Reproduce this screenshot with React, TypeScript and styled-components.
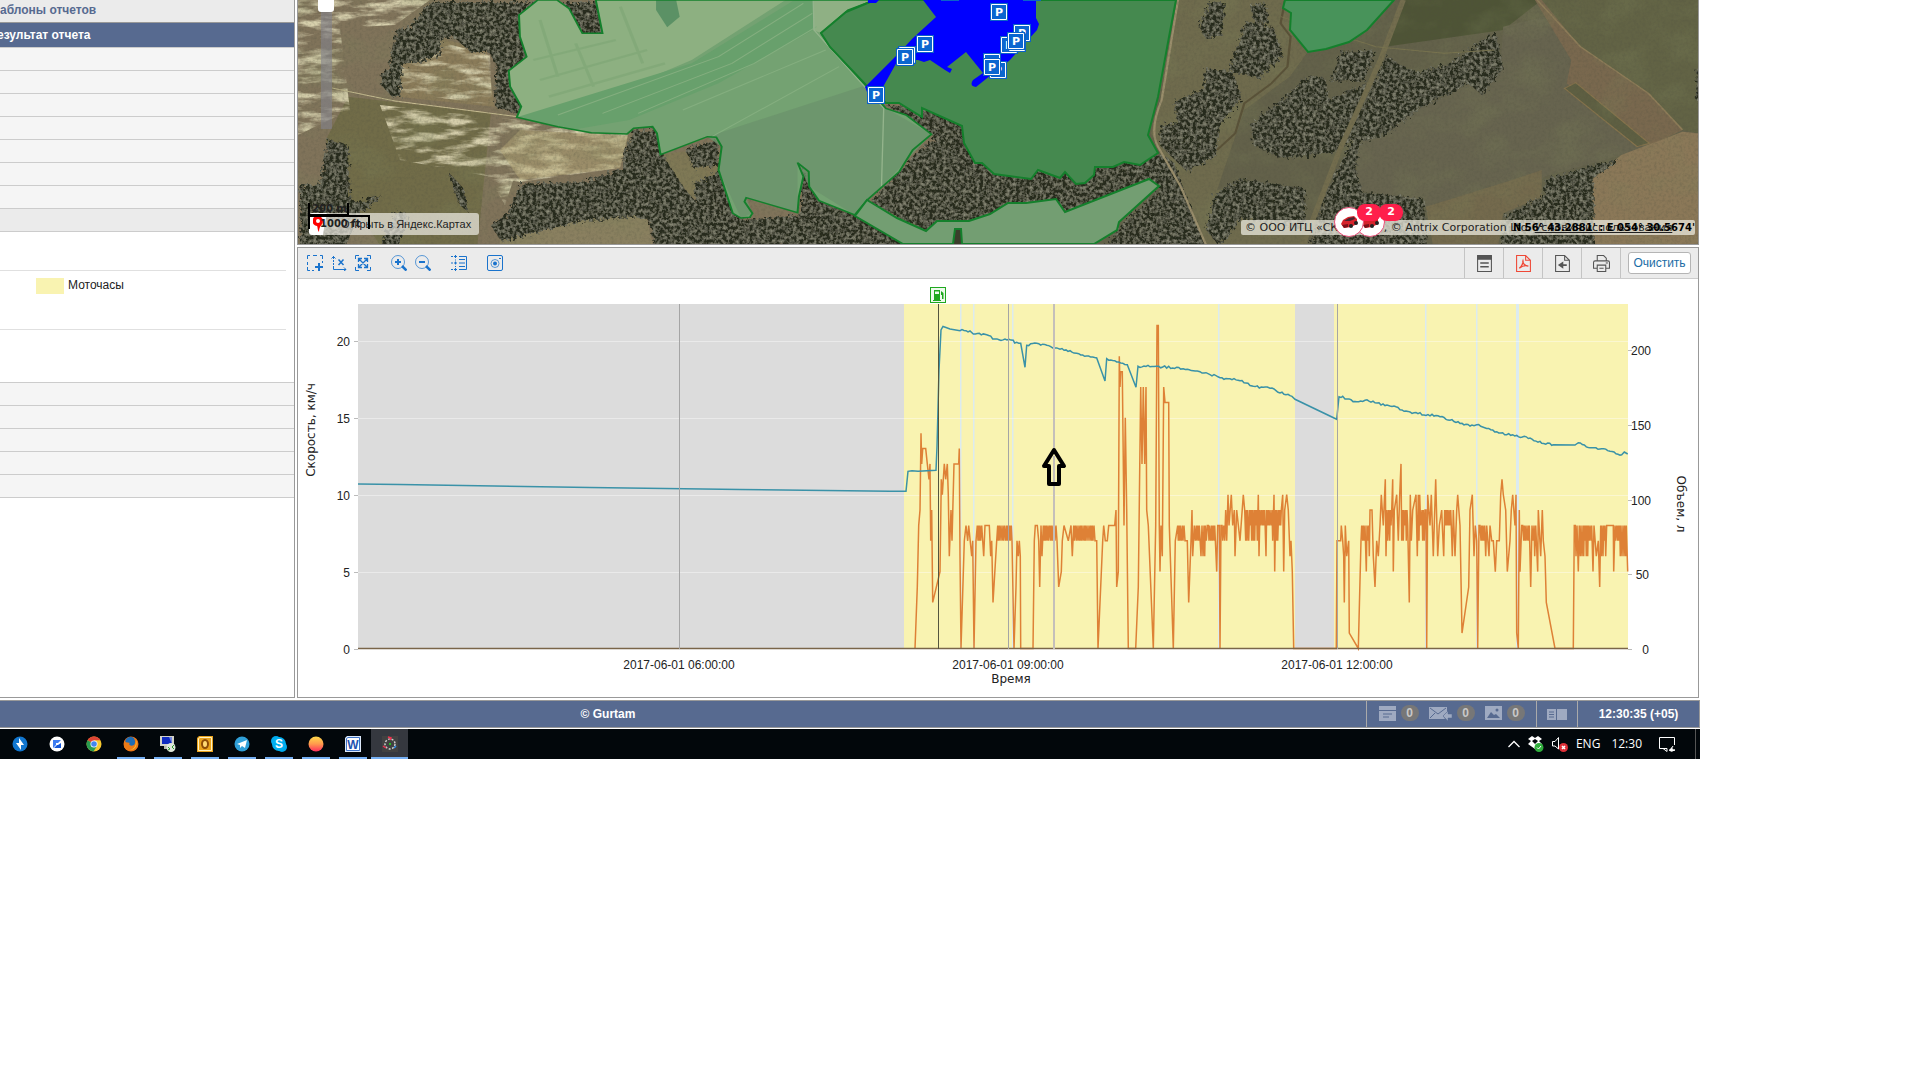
import React from "react";
import styled, { createGlobalStyle, css } from "styled-components";

const GlobalStyle = createGlobalStyle`
  *, *::before, *::after { box-sizing: border-box; }
  html, body { margin: 0; background: #fff; }
  body { font-family: "Liberation Sans", Arial, sans-serif; font-size: 12px; color: #222; }
  button { font: inherit; padding: 0; border: 0; background: none; color: inherit; }
  svg { display: block; }
`;

/* ---------- shell ---------- */

const Shell = styled.div`
  width: 100%;
  max-width: 1700px;
  overflow: hidden;
`;

const Workspace = styled.div`
  display: flex;
  padding-right: 1px;
  margin-bottom: 2px;
`;

/* ---------- sidebar ---------- */

const Sidebar = styled.aside`
  flex: none;
  width: 295px;
  border-right: 1px solid #999;
  border-bottom: 1px solid #999;
  overflow: hidden;
`;

const SectionTitle = styled.h2<{ $active?: boolean }>`
  margin: 0;
  height: ${(p) => (p.$active ? 25 : 23)}px;
  line-height: ${(p) => (p.$active ? 24 : 20)}px;
  border-bottom: 1px solid ${(p) => (p.$active ? "#ccc" : "#999")};
  background: ${(p) => (p.$active ? "#576a90" : "#ebebeb")};
  color: ${(p) => (p.$active ? "#fff" : "#576a90")};
  font-size: 12px;
  font-weight: bold;
  text-indent: ${(p) => (p.$active ? -3 : 0)}px;
  white-space: nowrap;
`;

const ResultRow = styled.div<{ $open?: boolean }>`
  height: 23px;
  border-bottom: 1px solid #ccc;
  background: ${(p) => (p.$open ? "#ebebeb" : "#f5f5f5")};
`;

const Legend = styled.div`
  height: 151px;
  border-bottom: 1px solid #ccc;
  padding: 38px 8px 0 0;
`;

const LegendGroup = styled.div`
  height: 60px;
  border-top: 1px solid #e0e0e0;
  border-bottom: 1px solid #e0e0e0;
  padding: 7px 0 0 36px;
`;

const LegendItem = styled.div`
  display: flex;
  align-items: flex-start;
  gap: 4px;
  height: 16px;
`;

const Swatch = styled.span`
  width: 28px;
  height: 16px;
  background: #f9f3b1;
`;

/* ---------- main column ---------- */

const Main = styled.main`
  flex: 1;
  min-width: 0;
  margin-left: 2px;
  display: flex;
  flex-direction: column;
  gap: 2px;
`;

const MapPanel = styled.section`
  position: relative;
  border: 1px solid #999;
  border-top: 0;
  overflow: hidden;
  svg.canvas { width: 100%; height: auto; }
`;

const ZoomSlider = styled.input`
  position: absolute;
  left: 20px;
  top: 0;
  width: 16px;
  height: 129px;
  margin: 0;
  appearance: none;
  writing-mode: vertical-lr;
  background: linear-gradient(rgba(130, 130, 140, 0.6), rgba(130, 130, 140, 0.6)) center / 11px 100% no-repeat;
  border-radius: 4px;
  &::-webkit-slider-thumb {
    appearance: none;
    width: 16px;
    height: 12px;
    border-radius: 0 0 3px 3px;
    background: #fff;
  }
`;

const YandexLink = styled.a`
  position: absolute;
  left: 11px;
  bottom: 9px;
  height: 22px;
  width: 170px;
  line-height: 22px;
  padding-left: 32px;
  border-radius: 3px;
  background: linear-gradient(100deg, #fff 17px, rgba(240, 238, 230, 0.7) 18px);
  color: #222;
  font-size: 11px;
  text-decoration: none;
  white-space: nowrap;
  svg { position: absolute; left: 4px; top: 3px; }
`;

const ScaleMeters = styled.div`
  position: absolute;
  left: 10px;
  bottom: 28px;
  width: 41px;
  height: 13px;
  border: 2px solid #000;
  border-top: 0;
  padding-left: 2px;
  font: bold 10px/12px "DejaVu Sans", sans-serif;
  white-space: nowrap;
`;

const ScaleFeet = styled.div`
  position: absolute;
  left: 10px;
  bottom: 15px;
  width: 62px;
  height: 14px;
  border: 2px solid #000;
  border-bottom: 0;
  padding-left: 10px;
  font: bold 10px/14px "DejaVu Sans", sans-serif;
  white-space: nowrap;
`;

const Copyright = styled.div`
  position: absolute;
  right: 3px;
  bottom: 9px;
  width: 454px;
  height: 15px;
  padding: 0 4px;
  border-radius: 2px;
  background: rgba(235, 233, 222, 0.75);
  font: 11px/15px "DejaVu Sans", sans-serif;
  color: #222;
  white-space: nowrap;
  overflow: hidden;
  a { color: inherit; }
`;

const Position = styled.div`
  position: absolute;
  right: 3px;
  bottom: 9px;
  font: bold 10px/15px "DejaVu Sans", sans-serif;
  color: #000;
  white-space: nowrap;
`;

const UnitMarker = styled.div<{ $x: number }>`
  position: absolute;
  right: ${(p) => p.$x}px;
  bottom: 7px;
  width: 30px;
  height: 30px;
  border-radius: 50%;
  border: 1px solid #e8517a;
  background: #fff;
  display: grid;
  place-items: center;
`;

const UnitCount = styled.span<{ $x: number }>`
  position: absolute;
  right: ${(p) => p.$x}px;
  bottom: 23px;
  width: 24px;
  height: 17px;
  border-radius: 8px;
  background: #ff1f4b;
  color: #fff;
  font: bold 11px/16px "DejaVu Sans", sans-serif;
  text-align: center;
`;

/* ---------- chart panel ---------- */

const ChartPanel = styled.section`
  border: 1px solid #999;
  svg.canvas { width: 100%; height: auto; }
`;

const Toolbar = styled.div`
  display: flex;
  height: 31px;
  background: #ebebeb;
  border-bottom: 1px solid #ccc;
  padding: 0 7px 0 5px;
`;

const ToolButton = styled.button<{ $gap?: boolean }>`
  width: 24px;
  display: grid;
  place-items: center;
  color: #1a73cc;
  margin-left: ${(p) => (p.$gap ? 12 : 0)}px;
`;

const Spacer = styled.div`
  flex: 1;
`;

const ExportButton = styled.button`
  && { border-left: 1px solid #c4c4c4; color: #555; }
  width: 39px;
  display: grid;
  place-items: center;
`;

const ClearSlot = styled.div`
  border-left: 1px solid #c4c4c4;
  padding: 4px 0 0 7px;
`;

const ClearButton = styled.button`
  && { border: 1px solid #b5b5b5; background: #fff; color: #1a6ca5; }
  width: 63px;
  height: 22px;
  border-radius: 3px;
  font-size: 12px;
`;

/* ---------- footer ---------- */

const Footer = styled.footer`
  display: flex;
  height: 28px;
  margin-bottom: 1px;
  border: 1px solid #999;
  border-left: 0;
  background: #576a90;
  color: #fff;
  font-weight: bold;
  line-height: 27px;
`;

const Vendor = styled.div`
  flex: 1;
  text-align: center;
  padding-right: 150px;
`;

const FooterCell = styled.div<{ $width: number; $gap?: number }>`
  width: ${(p) => p.$width}px;
  border-left: 1px solid #aaa;
  display: flex;
  align-items: center;
  justify-content: center;
  gap: ${(p) => p.$gap ?? 0}px;
`;

const Notice = styled.div`
  display: flex;
  align-items: center;
  gap: 5px;
  padding-bottom: 2px;
`;

const Badge = styled.span`
  width: 18px;
  height: 16px;
  border-radius: 8px;
  background: #777;
  color: #c8c8c8;
  font-size: 12px;
  line-height: 16px;
  text-align: center;
`;

/* ---------- taskbar ---------- */

const Taskbar = styled.nav`
  display: flex;
  height: 30px;
  background: #02070b;
  padding: 0 4px 0 1px;
  color: #fff;
  font: 12px/30px "Open Sans", "Noto Sans", sans-serif;
`;

const TaskButton = styled.button<{ $running?: boolean; $active?: boolean }>`
  width: 37px;
  display: grid;
  place-items: center;
  ${(p) =>
    p.$running &&
    css`
      background: linear-gradient(#76b0f4, #76b0f4) bottom / 28px 2px no-repeat;
    `}
  ${(p) =>
    p.$active &&
    css`
      background: linear-gradient(#76b0f4, #76b0f4) bottom / 100% 2px no-repeat #35383f;
    `}
`;

const Tray = styled.div`
  display: flex;
  align-items: center;
  margin-left: auto;
  padding-right: 19px;
  border-right: 1px solid #555;
  svg { margin-right: 8px; }
  svg:last-child { margin-right: 0; }
`;

const TrayText = styled.span`
  margin-right: 11px;
  &:last-of-type { margin-right: 17px; }
`;

/* ---------- map drawing ---------- */

const leftForest = [
  "310,0 700,0 700,105 540,330 505,335 455,315 458,190 440,150 400,150 362,105 335,115 332,160 290,178 246,190 243,285 225,285 200,250 202,210 218,200 222,150 235,80 262,75",
  "80,412 125,430 130,590 150,600 200,580 150,640 120,733 18,733 18,550 62,548",
  "235,625 262,640 240,733 200,733 210,680",
  "350,510 385,560 395,630 375,610",
  "765,385 822,385 835,470 880,560 905,600 900,545 960,505 1010,654 1140,640 1140,488 1190,602 1265,645 1390,733 812,733 800,655 770,643 640,660 470,718 445,670 480,640 515,545 650,540 740,502 745,450",
  "1330,308 1440,322 1510,378 1568,480 1568,650 1425,690 1295,600 1400,450 1440,405",
  "880,440 950,415 960,490 900,500",
];

const rightForest = [
  "0,515 370,455 400,480 470,733 250,733 290,660 372,560 350,537 170,637 145,600 0,635",
  "480,0 515,0 505,100 470,110 455,70",
  "570,10 600,0 610,60 580,70",
  "560,60 620,75 640,160 590,230 520,205",
  "470,200 530,210 550,290 505,360 492,460 430,510 370,430 372,370 410,360 400,300 465,260",
  "700,220 735,230 742,290 840,240 800,400 765,450 640,470 575,430 570,370 640,290",
  "770,150 845,145 820,235 745,240",
  "870,160 900,190 935,210 1000,190 1110,90 1125,200 1080,280 1050,245 940,320 865,400 810,420 800,500 815,570 950,590 960,733 700,733 735,570 800,400 850,210",
  "545,530 690,560 690,680 550,650 500,733 470,680 490,580",
  "1220,530 1380,470 1325,530 1325,733 1120,733 1130,640 1215,580",
  "1552,200 1562,200 1562,330 1550,290",
];

const fieldLight =
  "M555 0L513 45 515 110 530 170 490 212 493 260 518 320 508 352 600 380 675 398 755 402 770 385 812 380 822 400 830 464 935 410 955 412 967 440 960 510 992 640 1010 654 1030 652 1036 640 1018 605 1022 593 1060 608 1137 638 1140 590 1150 530 1137 488 1162 515 1163 560 1185 602 1265 645 1293 600 1365 515 1395 450 1437 403 1380 345 1335 325 1290 256 1210 140 1190 100 1250 30 1300 5V0H685L700 100H655L625 25 598 0Z";

const parkings: [number, number][] = [
  [950, -8], [1032, -8], [999, 12], [925, 44], [907, 55], [905, 57], [876, 95],
  [1022, 33], [1009, 45], [1017, 43], [1016, 41], [992, 62], [998, 70], [992, 67],
];

const Aerial = () => (
  <svg className="canvas" viewBox="298 0 1400 244" role="img" aria-label="Спутниковая карта">
    <defs>
      <filter id="grain" x="0" y="0" width="100%" height="100%">
        <feTurbulence type="fractalNoise" baseFrequency="0.35" numOctaves="3" seed="4" />
        <feColorMatrix values="0 0 0 0 0.08  0 0 0 0 0.08  0 0 0 0 0.05  1.8 0 0 0 -0.75" />
      </filter>
      <filter id="clouds" x="0" y="0" width="100%" height="100%">
        <feTurbulence type="fractalNoise" baseFrequency="0.02 0.03" numOctaves="4" seed="9" />
        <feColorMatrix values="0 0 0 0 0.2  0 0 0 0 0.22  0 0 0 0 0.1  2.4 0 0 0 -1.1" />
      </filter>
      <filter id="straw" x="0" y="0" width="100%" height="100%">
        <feTurbulence type="fractalNoise" baseFrequency="0.03 0.12" numOctaves="4" seed="21" result="n" />
        <feColorMatrix in="n" values="0 0 0 0 0.68  0 0 0 0 0.63  0 0 0 0 0.42  3.6 0 0 0 -1.55" />
        <feComposite in2="SourceGraphic" operator="in" />
      </filter>
      <filter id="wood" x="-5%" y="-5%" width="110%" height="110%">
        <feTurbulence type="fractalNoise" baseFrequency="0.3" numOctaves="3" seed="3" result="n" />
        <feDisplacementMap in="SourceGraphic" in2="n" scale="9" result="shape" />
        <feColorMatrix in="n" values="0 0 0 0 0.3  0 0 0 0 0.3  0 0 0 0 0.22  1.8 0 0 0 -0.7" result="light" />
        <feComposite in="light" in2="shape" operator="in" result="tex" />
        <feMerge><feMergeNode in="shape" /><feMergeNode in="tex" /></feMerge>
      </filter>
    </defs>
    <rect x="298" width="700" height="244" fill="#80735a" />
    <rect x="990" width="708" height="244" fill="#63614a" />
    <g transform="translate(290 0) scale(.4464 .3333)">
      <path d="M130 290L450 340 420 733H200L130 590 80 420Z" fill="#716c48" />
      <path d="M246 190L335 115 440 150 458 320 240 290Z" fill="#8a7b59" />
      <path d="M830 464L960 440V560L900 600Z" fill="#807755" />
      <path d="M470 718L640 660 770 643 800 655 812 733H470Z" fill="#8a8060" />
      <path d="M1185 602L1265 645 1390 733H1290L1190 670Z" fill="#6b5f49" />
    </g>
    <g filter="url(#straw)">
      <path d="M298 0H430L395 25 340 28 350 110 298 135ZM380 105L520 120 628 134 620 168 520 182 400 160ZM400 65L440 42 490 55 492 105 400 92Z" />
      <path d="M490 180L515 175 505 205Z" />
    </g>
    <path d="M520 130L628 136 620 168 520 180 500 150Z" fill="#b5a877" opacity=".5" />
    <path d="M332 88Q370 96 395 101L520 117" fill="none" stroke="#c9bf93" strokeWidth="1" />
    <g transform="translate(990 0) scale(.4541 .3333)">
      <path d="M412 0H650L700 155 660 230 560 330 500 570 560 560 690 600 700 733H475L420 560 355 400 375 300Z" fill="#6f6b4d" />
      <path d="M910 0H1215L1130 90 870 140Z" fill="#4e5436" />
      <path d="M805 420L1060 250 1125 180 1130 80 1220 50 1450 440 1380 470 1220 530 1150 640 960 620 810 570Z" fill="#67644f" />
      <path d="M1205 0H1560V400L1525 390 1450 280 1300 140Z" fill="#626345" />
      <path d="M1200 0H1215L1300 140 1450 280 1525 390 1450 440 1270 250 1280 180Z" fill="#79684e" />
      <path d="M1390 465L1525 395 1562 400V733H1330L1325 540Z" fill="#8b7858" />
      <path d="M1265 265L1290 248 1452 430 1425 440Z" fill="#5e5f42" stroke="#86734c" strokeWidth="3" />
      <path d="M960 620L1150 540 1215 510V590L1130 640 1120 733H975Z" fill="#746a4d" />
    </g>
    <rect x="298" width="1400" height="244" filter="url(#clouds)" opacity=".35" />
    <g filter="url(#wood)" fill="#26291d">
      <g transform="translate(292 2) scale(.4464 .3333)">{leftForest.map((p) => <polygon key={p} points={p} />)}</g>
      <g transform="translate(992 2) scale(.4541 .3333)">{rightForest.map((p) => <polygon key={p} points={p} />)}</g>
    </g>
    <g transform="translate(990 0) scale(.4541 .3333)" fill="none">
      <path d="M650 0L640 70 662 110 655 200 620 250 560 310 540 400 500 450" stroke="#5a5238" strokeWidth="5" />
      <path d="M910 0L860 180 770 450 690 733" stroke="#736d4e" strokeWidth="12" />
      <path d="M414 0L378 300Q350 390 370 440L420 560 475 733" stroke="#9a8e6c" strokeWidth="5" />
      <path d="M1205 0L1300 140 1450 280 1525 390" stroke="#8d7c58" strokeWidth="4" />
      <path d="M640 50L850 140 1000 160 1110 150" stroke="#78734f" strokeWidth="3" />
    </g>
    <rect x="298" width="1400" height="244" filter="url(#grain)" opacity=".3" />

    <g transform="translate(290 0) scale(.4464 .3333)">
      <path d={fieldLight} fill="#74a272" />
      <path d="M555 0L513 45 515 110 530 170 490 212 493 260 518 320 508 352 600 350 900 180 1110 0H685L700 100H655L625 25 598 0Z" fill="#8db081" />
      <path d="M508 352L900 190 1130 0H1172V90L960 250 760 360 640 388Z" fill="#68a06c" />
      <path d="M1172 0H1300L1190 100 1172 90Z" fill="#8fb084" />
      <path d="M1290 256L1335 325 1437 403 1265 645 1163 560 1137 488 1137 638 1022 593 1036 640 1010 654 960 510 967 440 935 410Z" fill="#6b936b" opacity=".8" />
      <path d="M600 345L960 170 1150 10M700 340L990 190 1170 40M780 340L1040 190 1180 80M880 330L1200 150M945 410L1230 200" stroke="#84ae7f" strokeWidth="3" fill="none" />
      <path d="M1172 0L1174 90 1330 325 1325 560" stroke="#94b48c" strokeWidth="3" fill="none" />
      <path d="M545 180L730 120M560 240L800 150M580 290L840 190M560 60L600 230M740 20L790 190M640 130L680 260" stroke="#7fa676" strokeWidth="7" fill="none" opacity=".7" />
      <path d="M820 0L865 0 873 50 845 82 820 30Z" fill="#5b9165" />
      <path d={fieldLight} fill="none" stroke="#14802c" strokeWidth="4.5" />
    </g>
    <path d="M870 2L846 12 821 33 830 47 866 85 886 103 899 103 922 117V108L962 126 964 143 975 163H982L994 174 1031 179 1038 170 1060 178 1065 172 1076 184 1085 183 1094 175 1095 167H1113L1124 162 1140 165 1158 153 1148 135 1158 97 1169 37 1176 0H870Z" fill="#45894f" stroke="#14802c" strokeWidth="2" />
    <path d="M855 216L867 200 897 218 926 231 937 221H969L990 214 1008 203H1026L1056 199 1065 212 1149 179 1159 186 1119 222 1117 230 1094 244H903Z" fill="#739e72" stroke="#14802c" strokeWidth="2" />
    <path d="M953 244L955 229H961L962 244" fill="#3b3d2b" stroke="#14802c" strokeWidth="2" />
    <path d="M1285 0L1283 8 1291 13 1290 30 1308 52 1326 49 1349 42 1367 30 1394 0Z" fill="#48935a" stroke="#14802c" strokeWidth="2" />
    <path d="M923 0L936 17 913 38 897 55 865 87 867 92 883 87 898 60H918L924 62 930 60 945 70 950 73 952 69 947 67 966 52 983 73 973 80Q969 86 976 87L986 79 1010 60 1037 30 1039 24 1036 18V0ZM868 0H879L876 3H868Z" fill="#00f" />
    {parkings.map(([x, y], i) => (
      <g key={i} transform={`translate(${x} ${y})`}>
        <path d="M-9-9H9V9H-9Z" fill="#0b62c8" />
        <path d="M-7.500-7.500H7.500V7.500H-7.500Z" fill="#0b66d0" stroke="#fff" />
        {y > 0 && <text textAnchor="middle" y="4" fill="#fff" fontFamily="DejaVu Sans, sans-serif" fontWeight="bold" fontSize="11">P</text>}
      </g>
    ))}
  </svg>
);

const Car = () => (
  <svg width="20" height="14" viewBox="0 0 20 14">
    <path d="M2 9L4 5 9 2 15 1 18 4V9L12 12 5 13Z" fill="#d6232b" />
    <path d="M5 6L10 3 15 2 16 4 11 6Z" fill="#4a2430" />
    <path d="M3 10L9 9V12L5 13Z" fill="#7d1018" />
    <circle cx="12" cy="11" r="2" fill="#222" />
    <circle cx="17" cy="8" r="2" fill="#222" />
  </svg>
);

/* ---------- chart data ---------- */

/* Time runs in thirds of a pixel from x = 890; a four-number entry [from, to, low, high] is a dense oscillation. */
type Sample = [number, number] | [number, number, number, number];

const speed: Sample[] = [
  [75, 0], [82, 4], [86, 8], [90, 9], [93, 14], [95, 12], [98, 13], [107, 13], [112, 12], [117, 11], [120, 12], [122, 7], [125, 9], [128, 3], [150, 5], [154, 11], [157, 10], [160, 11], [163, 12], [167, 11], [172, 12], [175, 10], [178, 6], [183, 9], [186, 7], [192, 12], [206, 12], [208, 13], [210, 6], [213, 0],
  [223, 7], [228, 8], [233, 7], [236, 8], [245, 6], [248, 7], [252, 0], [258, 7], [262, 279, 7, 8], [281, 6], [285, 8], [298, 8], [302, 6], [305, 7], [309, 3], [320, 7], [323, 367, 7, 8], [372, 0], [378, 4], [381, 7], [385, 6], [388, 7], [391, 6], [392, 0], [429, 0], [433, 7], [436, 8], [442, 8], [446, 7], [449, 4], [453, 8], [456, 6], [460, 502, 7, 8], [506, 4], [514, 5], [517, 7], [522, 8], [535, 7], [543, 8], [547, 6], [551, 616, 7, 8],
  [620, 7], [624, 0], [638, 7], [641, 8], [646, 7], [652, 7], [656, 8], [674, 8], [678, 9], [680, 4], [685, 5], [688, 19], [690, 17], [692, 18], [697, 18], [702, 8], [706, 15], [710, 9], [715, 0], [737, 0], [745, 4], [752, 17], [756, 12], [760, 17], [764, 12], [768, 17], [770, 9], [775, 8], [790, 0], [797, 8], [801, 21], [805, 21], [808, 8], [810, 5], [813, 8], [817, 6], [821, 17], [825, 16], [836, 16], [838, 8], [850, 0], [856, 7], [863, 885, 7, 8],
  [892, 7], [896, 3], [903, 7], [906, 9], [908, 6], [913, 930, 7, 8], [933, 6], [936, 952, 6, 8], [955, 975, 7, 8], [980, 5], [983, 8], [988, 8], [990, 0], [993, 8], [996, 1005, 7, 8], [1007, 9], [1010, 7], [1014, 10], [1017, 8], [1024, 10], [1028, 8], [1033, 9], [1035, 6], [1040, 9], [1050, 7], [1060, 10], [1064, 1102, 7, 9], [1105, 10], [1107, 6], [1110, 1126, 8, 9], [1128, 6], [1130, 1149, 7, 9], [1152, 10], [1154, 5], [1157, 1175, 7, 9], [1178, 10], [1181, 5], [1184, 9], [1190, 10], [1195, 9], [1200, 6], [1203, 7], [1207, 5], [1211, 0],
  [1339, 0], [1341, 7], [1352, 7], [1354, 8], [1358, 7], [1361, 6], [1363, 3], [1366, 8], [1370, 6], [1376, 7], [1378, 1], [1405, 0], [1413, 7], [1415, 1426, 7, 8], [1429, 5], [1431, 1438, 6, 8], [1440, 9], [1446, 9], [1450, 6], [1455, 4], [1460, 7], [1465, 6], [1470, 8], [1474, 10], [1480, 8], [1486, 11], [1488, 6], [1491, 1505, 7, 9], [1508, 11], [1510, 5], [1513, 9], [1520, 10], [1525, 7], [1529, 10], [1533, 12], [1535, 7], [1538, 1554, 7, 9], [1558, 3], [1561, 10], [1564, 7], [1568, 9], [1578, 10], [1582, 6], [1585, 1593, 7, 10], [1596, 1605, 7, 9], [1608, 9], [1610, 0], [1613, 10], [1620, 8], [1624, 10], [1630, 6], [1637, 11], [1643, 6], [1648, 8], [1655, 1658, 8, 9], [1661, 6], [1664, 1684, 8, 9], [1687, 6], [1690, 9], [1695, 6], [1700, 9], [1703, 10], [1710, 8], [1716, 1], [1736, 4], [1740, 9], [1747, 10], [1752, 6], [1756, 8], [1760, 7], [1763, 0], [1767, 8],
  [1770, 1784, 7, 8], [1787, 6], [1790, 8], [1797, 6], [1800, 8], [1805, 7], [1810, 7], [1816, 5], [1820, 7], [1828, 7], [1832, 10], [1836, 11], [1840, 10], [1847, 9], [1852, 5], [1860, 7], [1864, 9], [1868, 10], [1875, 8], [1878, 10], [1880, 1], [1885, 0], [1888, 9], [1890, 5], [1895, 8], [1898, 1918, 7, 8], [1922, 4], [1926, 1938, 6, 8], [1943, 5], [1945, 9], [1952, 6], [1957, 9], [1960, 7], [1965, 6], [1969, 3], [1995, 0], [2050, 0], [2053, 8], [2056, 2062, 6, 8], [2065, 5], [2068, 2106, 6, 8], [2109, 5], [2112, 8], [2119, 6], [2125, 7], [2129, 4], [2132, 2150, 6, 8], [2153, 8], [2170, 8], [2171, 5], [2175, 2210, 6, 8], [2213, 5],
];

/* Fuel level, same time unit, height in thirds of a pixel below y = 280. */
const fuel: [number, number][] = [
  [210, 152], [240, 153], [250, 162], [290, 164], [315, 177], [370, 181], [374, 189], [392, 190], [405, 262], [410, 196], [440, 190], [470, 196], [510, 208], [540, 212], [560, 220], [620, 234], [645, 303], [650, 236], [680, 246], [712, 254], [738, 322], [744, 259], [800, 259], [880, 266], [930, 275], [990, 293], [1050, 302], [1090, 319], [1140, 325], [1200, 347], [1215, 358], [1340, 418], [1347, 350], [1358, 349], [1365, 357], [1400, 365], [1425, 361], [1500, 378], [1560, 396], [1650, 410], [1740, 438], [1760, 434], [1820, 455], [1885, 470], [1920, 474], [1955, 490], [1990, 494], [2055, 495], [2065, 488], [2100, 503], [2135, 506], [2160, 514], [2195, 524], [2203, 516], [2213, 522],
];

const random = (seed: number) => () => {
  seed = (seed * 16807) % 2147483647;
  return seed / 2147483647;
};

const speedPath = (() => {
  const next = random(77);
  const out: string[] = [];
  const put = (t: number, v: number) => out.push(`${(890 + t / 3).toFixed(1)} ${(648.5 - v * 15.38).toFixed(1)}`);
  for (const s of speed) {
    if (s.length === 2) put(s[0], s[1]);
    else {
      const [from, to, low, high] = s;
      let up = true;
      for (let t = from; t <= to; t += 2 + Math.floor(next() * 1.7)) {
        const slack = high - low > 1 && next() > 0.65 ? 1 : 0;
        put(t, up ? high : low + slack);
        up = !up;
      }
    }
  }
  return "M" + out.join("L");
})();

const fuelPath = (() => {
  const next = random(1234);
  const out = ["358 484L400 484.500L590 487.500L740 489.500L890 491.300L906 491.300L908 471.300L912 470.700L918 471.300L936 470.300L937 447L939 370L941 330L943 326.500L946 327.500L950 329"];
  fuel.forEach(([t, y], i) => {
    out.push(`${(890 + t / 3).toFixed(1)} ${(280 + y / 3).toFixed(1)}`);
    const after = fuel[i + 1];
    if (!after || Math.abs(after[1] - y) > 35 || t === 1990) return;
    for (let u = t + 6; u < after[0] - 4; u += 6) {
      const level = y + ((after[1] - y) * (u - t)) / (after[0] - t) + (next() - 0.5) * 7;
      out.push(`${(890 + u / 3).toFixed(1)} ${(280 + level / 3).toFixed(1)}`);
    }
  });
  return "M" + out.join("L");
})();

const ChartDrawing = () => (
  <svg className="canvas" viewBox="298 279 1400 418" role="img" aria-label="Скорость и объем топлива">
    <rect x="358" y="304" width="1270" height="345" fill="#dcdcdc" />
    <rect x="904" y="304" width="391" height="345" fill="#f9f3b1" />
    <rect x="1334" y="304" width="294" height="345" fill="#f9f3b1" />
    <g fill="#dcebf0">
      {[960, 973, 1012, 1218, 1425, 1476].map((x) => <rect key={x} x={x} y="304" width="1.500" height="345" />)}
      <rect x="1516" y="304" width="3" height="345" />
    </g>
    {[20, 15, 10, 5, 0].map((v) => {
      const y = Math.round(649 - v * 15.38) + 0.5;
      return (
        <g key={v}>
          {v > 0 && <path d={`M358 ${y}H1628`} stroke="#fff" opacity=".4" />}
          <path d={`M354 ${y}H358`} stroke="#bbb" />
          <text x="350" y={y + 4} textAnchor="end">{v}</text>
        </g>
      );
    })}
    {[200, 150, 100, 50, 0].map((v) => {
      const y = Math.round(649 - v * 1.494) + 0.5;
      return (
        <g key={v}>
          <path d={`M1628 ${y}H1632`} stroke="#bbb" />
          <text x={v < 100 ? 1649 : 1651} y={y + 4} textAnchor="end">{v}</text>
        </g>
      );
    })}
    <path d={speedPath} fill="none" stroke="#de8136" strokeWidth="1.500" />
    <path d="M358 648.500H1628" stroke="#7a6549" strokeWidth="1.500" />
    <path d={fuelPath} fill="none" stroke="#3a92a8" strokeWidth="1.500" />
    <path d="M679.500 304V649M1008.500 304V649M1337.500 304V649" stroke="#a5a5a5" />
    <path d="M1054 304V649" stroke="#c4bfba" strokeWidth="2" />
    <path d="M938.500 304V649" stroke="#55553f" />
    <path d="M1054 450L1064 466H1059V484H1049V466H1044Z" fill="#f9f3b1" stroke="#000" strokeWidth="4" strokeLinejoin="round" />
    <path d="M1054 456V482" stroke="#c4bfba" strokeWidth="2" />
    <rect x="930.500" y="287.500" width="15" height="15" fill="#eefaee" stroke="#1fa81f" />
    <path d="M934 290H940V300H941V301H933V300H934ZM941 291L943.500 293V299H942V295H941Z" fill="#1fa81f" />
    <path d="M935 291.500H939V294H935Z" fill="#eefaee" />
    {["06", "09", "12"].map((h, i) => (
      <text key={h} x={679 + i * 329} y="669" textAnchor="middle">{`2017-06-01 ${h}:00:00`}</text>
    ))}
    <g fontFamily="DejaVu Sans, sans-serif">
      <text x="1011" y="683" textAnchor="middle">Время</text>
      <text transform="translate(315 430) rotate(-90)" textAnchor="middle">Скорость, км/ч</text>
      <text transform="translate(1677 504) rotate(90)" textAnchor="middle">Объем, л</text>
    </g>
  </svg>
);

const ChartFrame = styled.div`
  font-size: 12px;
  svg { fill: #222; }
`;

/* ---------- small icons ---------- */

const Line = ({ children, size = 16 }: { children: React.ReactNode; size?: number }) => (
  <svg width={size} height={size} viewBox="0 0 16 16" fill="none" stroke="currentColor">{children}</svg>
);

const tools = [
  { label: "Выделить область", icon: <Line><path d="M.5 4V.5H3M6 .5H10M13 .5H15.500V4M.5 7V10M.5 12V15.500H3M5 15.500H7M15.500 6V8" /><path d="M12 8V16M8 12H16" strokeWidth="2" /></Line> },
  { label: "Масштаб по оси X", icon: <Line><path d="M2.500 1V4M2.500 5V7M2.500 8V10M2.500 11V14.500H15M.5 3.500L2.500 1.500 4.500 3.500M13 12.500L15 14.500 13 16" /><path d="M7.500 4.500L12.500 10M12.500 4.500L7.500 10" strokeWidth="1.500" /></Line> },
  { label: "Показать всё", icon: <Line><path d="M.5 4V.5H4M12 .5H15.500V4M.5 12V15.500H4M12 15.500H15.500V12" /><path d="M3.500 3.500L12.500 12.500M12.500 3.500L3.500 12.500M3.500 7V3.500H7M9 3.500H12.500V7M3.500 9V12.500H7M9 12.500H12.500V9" strokeWidth="1.300" /></Line> },
  { label: "Приблизить", gap: true, icon: <Line><circle cx="7" cy="7" r="6.500" opacity=".7" /><path d="M7 4V10M4 7H10" strokeWidth="2" /><path d="M11 11L15.500 15.500" strokeWidth="2.500" /></Line> },
  { label: "Отдалить", icon: <Line><circle cx="7" cy="7" r="6.500" opacity=".7" /><path d="M4 7H10" strokeWidth="2" /><path d="M11 11L15.500 15.500" strokeWidth="2.500" /></Line> },
  { label: "Легенда", gap: true, icon: <Line><path d="M0 1.500H2M3 1.500H6M8 1.500H15.500V14.500H8M0 8H2M3 8H6M0 14.500H2M3 14.500H6M4.500 0V3M4.500 4.500V5.500M4.500 6.500V9.500M4.500 11V12M4.500 13V16M8 4.500H14M8 8H14M8 11.500H14" /></Line> },
  { label: "Следить", gap: true, icon: <Line><rect x=".5" y=".5" width="15" height="15" rx="1.500" /><circle cx="8" cy="8.500" r="4" opacity=".7" /><circle cx="8" cy="8.500" r="2" fill="currentColor" stroke="none" /><path d="M12 3.500H14" /></Line> },
];

const exportsList = [
  { label: "Отчет", icon: <Line size={17}><path d="M1.500 .5H14.500V15.500H1.500Z" /><path d="M1 2.500H15" strokeWidth="4" /><path d="M4 7.500H12M4 11H12" strokeWidth="1.300" /></Line> },
  { label: "PDF", icon: <Line size={17}><g stroke="#ef4836"><path d="M1.500 .5H10L14.500 5V15.500H1.500ZM10 .5V5H14.500" /><path d="M4 12.500C6 11 8 7.500 7.500 5.500C7 7 9 10.500 12.500 10.500C10 9.500 6 11 4 12.500Z" strokeWidth="1.300" /></g></Line> },
  { label: "Экспорт", icon: <Line size={17}><path d="M1.500 .5H10L14.500 5V15.500H1.500ZM10 .5V5H14.500" /><path d="M12 9.500H5M8 7.500L5 9.500 8 11.500Z" fill="currentColor" strokeWidth="1.500" /></Line> },
  { label: "Печать", icon: <Line size={17}><path d="M4 5V.5H10L12.500 3V5M3.500 12.500H.5V7Q.5 5.500 2 5.500H14Q15.500 5.500 15.500 7V12.500H12.500M4 9.500H12V15.500H4ZM6 12.500H10" /><path d="M12 7.500H14" /></Line> },
];

const Disc = ({ fill, children }: { fill: string; children?: React.ReactNode }) => (
  <svg width="16" height="16" viewBox="0 0 16 16"><circle cx="8" cy="8" r="7.500" fill={fill} />{children}</svg>
);

const tasks = [
  { label: "Навигатор", icon: <Disc fill="#1176cf"><path d="M7 2L12 9H9L9 14 4 7H7Z" fill="#fff" /></Disc> },
  { label: "Облако", icon: <Disc fill="#fff"><path d="M4 4H12L9 7H7V9L4 12Z" fill="#3d7df2" /><path d="M12 7V12H5L8 9H9Z" fill="#1557d8" /></Disc> },
  { label: "Chrome", icon: <Disc fill="#f7c92f"><path d="M8 8L1.500 4.300A7.500 7.500 0 0 1 14.500 4.300H8Z" fill="#df4435" /><path d="M8 8L1.500 4.300A7.500 7.500 0 0 0 7.500 15.500L11 10Z" fill="#289b50" /><circle cx="8" cy="8" r="3.500" fill="#fff" /><circle cx="8" cy="8" r="2.800" fill="#4386ee" /></Disc> },
  { label: "Firefox", running: true, icon: <Disc fill="#e46b16"><circle cx="7.500" cy="6" r="5.200" fill="#1f6db5" /><path d="M1 4C2 7 4 6 7 7C5 8 7 11 11 9C13 7 12 3 10 1C15 3 16 8 14 12C11 16 4 16 1 11Z" fill="#ec7b18" /><path d="M13 4C15 9 12 14 7 14C13 12 13 8 13 4Z" fill="#fbc52e" /></Disc> },
  { label: "Удаленный рабочий стол", running: true, icon: <svg width="16" height="16" viewBox="0 0 16 16"><path d="M0 0H14V10H0Z" fill="#d3d2c7" /><path d="M2 1H12V8H2Z" fill="#102bc0" /><path d="M4 10H10L12 13H4Z" fill="#b6b6ab" /><path d="M9 1H12V8Z" fill="#7186e0" /><circle cx="11" cy="11.500" r="4.500" fill="#e0e7db" /><path d="M8 11L10 13 8 14M14 9L12 11 14 13" stroke="#2d992d" fill="none" /></svg> },
  { label: "Outlook", running: true, icon: <svg width="16" height="16" viewBox="0 0 16 16"><path d="M0 2L2 0H16V16H0Z" fill="#e9a21c" /><path d="M1.500 2.500L3 1.500H14.500V14.500H1.500Z" fill="none" stroke="#fff3c4" /><ellipse cx="8" cy="8" rx="3" ry="4" fill="#ffd873" stroke="#8c4a06" strokeWidth="2" /></svg> },
  { label: "Telegram", running: true, icon: <Disc fill="#2f9fd8"><path d="M3 8L13 4 11 12 8 10 6 12V9Z" fill="#fff" /></Disc> },
  { label: "Skype", running: true, icon: <svg width="16" height="16" viewBox="0 0 16 16"><circle cx="5" cy="5" r="5" fill="#00a9ec" /><circle cx="11" cy="11" r="5" fill="#00a9ec" /><circle cx="8" cy="8" r="7" fill="#00aff0" /><text x="8" y="12" textAnchor="middle" fill="#fff" fontFamily="Liberation Sans, sans-serif" fontSize="12" fontWeight="bold">S</text></svg> },
  { label: "Закат", running: true, icon: <Disc fill="url(#sunset)"><defs><linearGradient id="sunset" x2="0" y2="1"><stop stopColor="#ffd94a" /><stop offset=".5" stopColor="#ff9a4d" /><stop offset="1" stopColor="#ff2d5e" /></linearGradient></defs></Disc> },
  { label: "Word", running: true, icon: <svg width="16" height="16" viewBox="0 0 16 16"><path d="M0 2L2 0H16V16H0Z" fill="#dce9fa" /><path d="M1.500 2.500L3 1.500H14.500V14.500H1.500Z" fill="#fff" stroke="#3f74c8" /><text x="8" y="12.500" textAnchor="middle" fill="#1d54b0" fontFamily="Liberation Sans, sans-serif" fontSize="12" fontWeight="bold">W</text></svg> },
  { label: "Снимок экрана", active: true, icon: <svg width="16" height="16" viewBox="0 0 16 16"><path d="M0 0H16V16H0Z" fill="#414141" /><circle cx="8" cy="8" r="5" fill="none" stroke="#ccc" strokeDasharray="2 1.500" strokeWidth="1.500" /><path d="M6 1L9 2 8 4M1 10L4 12" stroke="#f03050" strokeWidth="1.500" fill="none" /><path d="M12 12L14 10" stroke="#2f8ef0" strokeWidth="1.500" /><path d="M7 7H9V9H7Z" fill="#24c024" /></svg> },
];

const App = () => (
  <>
    <GlobalStyle />
    <Shell>
      <Workspace>
        <Sidebar>
          <SectionTitle>аблоны отчетов</SectionTitle>
          <SectionTitle $active>езультат отчета</SectionTitle>
          {[0, 1, 2, 3, 4, 5, 6, 7].map((n) => <ResultRow key={n} $open={n === 7} />)}
          <Legend>
            <LegendGroup>
              <LegendItem><Swatch />Моточасы</LegendItem>
            </LegendGroup>
          </Legend>
          {[0, 1, 2, 3, 4].map((n) => <ResultRow key={n} />)}
        </Sidebar>

        <Main>
          <MapPanel>
            <Aerial />
            <ZoomSlider type="range" min={0} max={18} defaultValue={0} aria-label="Масштаб карты" />
            <YandexLink href="#yandex">
              <svg width="11" height="16" viewBox="0 0 11 16"><path d="M5 0A5 5 0 0 1 10 5C10 9 6 9 6 16C4 13 5 11 4 10A5 5 0 0 1 5 0Z" fill="#f00" /><circle cx="5" cy="5" r="2" fill="#fff" /></svg>
              Открыть в Яндекс.Картах
            </YandexLink>
            <ScaleMeters>200 m</ScaleMeters>
            <ScaleFeet>1000 ft</ScaleFeet>
            <Copyright>© ООО ИТЦ «СКАНЭКС», © Antrix Corporation Ltd. <a href="#terms">Условия использования</a></Copyright>
            <Position>N 56° 43.2881' : E 054° 30.5674'</Position>
            <UnitMarker $x={313}><Car /></UnitMarker>
            <UnitMarker $x={334}><Car /></UnitMarker>
            <UnitCount $x={317}>2</UnitCount>
            <UnitCount $x={295}>2</UnitCount>
          </MapPanel>

          <ChartPanel>
            <Toolbar>
              {tools.map((t) => <ToolButton key={t.label} $gap={t.gap} aria-label={t.label}>{t.icon}</ToolButton>)}
              <Spacer />
              {exportsList.map((t) => <ExportButton key={t.label} aria-label={t.label}>{t.icon}</ExportButton>)}
              <ClearSlot><ClearButton>Очистить</ClearButton></ClearSlot>
            </Toolbar>
            <ChartFrame><ChartDrawing /></ChartFrame>
          </ChartPanel>
        </Main>
      </Workspace>

      <Footer>
        <Vendor>© Gurtam</Vendor>
        <FooterCell $width={170} $gap={10}>
          <Notice>
            <svg width="17" height="15" viewBox="0 0 17 15" fill="#9faac1"><path d="M0 0H17V4H0ZM0 5H17V15H0Z" /><path d="M4 8H13M4 11H10" stroke="#576a90" /></svg>
            <Badge>0</Badge>
          </Notice>
          <Notice>
            <svg width="23" height="15" viewBox="0 0 23 15" fill="#9faac1"><path d="M0 1H18V6L14 10 16 13H0Z" /><path d="M1 2L9 8 17 2M1 12L6 7" stroke="#576a90" fill="none" /><path d="M14 10L19 5V8H23V12H19V15Z" stroke="#576a90" strokeWidth=".5" /></svg>
            <Badge>0</Badge>
          </Notice>
          <Notice>
            <svg width="17" height="14" viewBox="0 0 17 14" fill="#9faac1"><path d="M0 0H17V14H0Z" /><path d="M2 12L6 6 9 9 11 8 15 12Z" fill="#576a90" /><circle cx="12" cy="4" r="1.500" fill="#576a90" /></svg>
            <Badge>0</Badge>
          </Notice>
        </FooterCell>
        <FooterCell $width={41}>
          <svg width="20" height="11" viewBox="0 0 20 11" fill="#9faac1"><path d="M0 0H9V11H0ZM10 0H20V11H10Z" /><path d="M2 3H7M2 5.500H7M2 8H7" stroke="#576a90" /></svg>
        </FooterCell>
        <FooterCell $width={122}>12:30:35 (+05)</FooterCell>
      </Footer>

      <Taskbar>
        {tasks.map((t) => <TaskButton key={t.label} $running={t.running} $active={t.active} aria-label={t.label}>{t.icon}</TaskButton>)}
        <Tray>
          <svg width="12" height="8" viewBox="0 0 12 8" fill="none" stroke="#fff"><path d="M.5 7L6 1.500 11.500 7" strokeWidth="1.300" /></svg>
          <svg width="16" height="16" viewBox="0 0 16 16"><path d="M0 3L4 0 7 2 10 0 14 3 11 5 14 8 7 13 0 8 3 5Z" fill="#fff" /><path d="M7 3L10 5 7 8 4 5Z" fill="#02070b" /><circle cx="11" cy="11.500" r="4.500" fill="#2fae3c" /><path d="M9 11.500L10.500 13 13 10" stroke="#fff" fill="none" /></svg>
          <svg width="16" height="16" viewBox="0 0 16 16"><path d="M.5 5.500H3L6.500 1.500V13L3 10H.5Z" fill="none" stroke="#fff" /><circle cx="11.500" cy="11.500" r="4.500" fill="#de3038" /><path d="M10 10L13 13M13 10L10 13" stroke="#fff" strokeWidth="1.500" /></svg>
          <TrayText>ENG</TrayText>
          <TrayText>12:30</TrayText>
          <svg width="17" height="16" viewBox="0 0 17 16" fill="none" stroke="#fff"><path d="M8 12.500H5L.5 12.500V1.500H15.500V9M4 12.500L8 15.500V12.500" /><path d="M14 10Q11 14 16 14Q12 16.500 10 14" fill="#fff" /></svg>
        </Tray>
      </Taskbar>
    </Shell>
  </>
);

export default App;
